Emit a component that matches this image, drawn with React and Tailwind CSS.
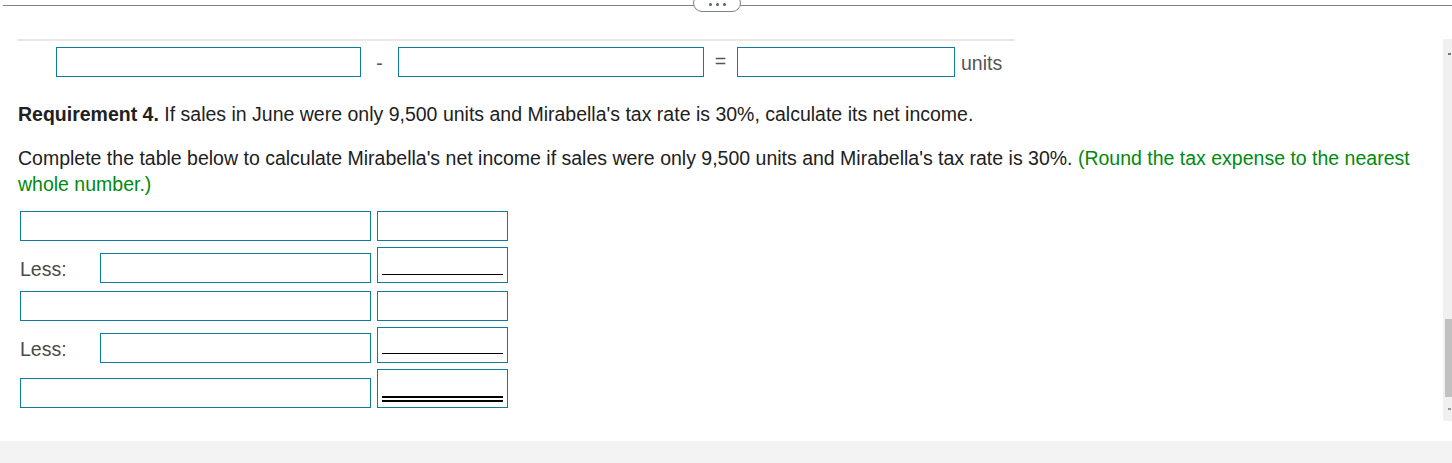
export default function App() {
    const box = "border border-[#0e7c9e] bg-white";
    const font = { fontFamily: '"Liberation Sans", Arial, sans-serif' };

    return (
        <div className="w-[1452px] h-[463px] bg-white overflow-hidden" style={font}>
            <div className="relative h-[39px]">
                <div className="absolute left-[3px] right-0 top-[5px] h-px bg-[#7b8391]"></div>
                <div className="absolute left-[693px] top-[-6px] w-[48px] h-[18px] rounded-full border border-[#7b8391] bg-white flex items-end justify-center gap-[4px] pb-[5px]">
                    <span className="w-[3px] h-[3px] rounded-full bg-[#59606b]"></span>
                    <span className="w-[3px] h-[3px] rounded-full bg-[#59606b]"></span>
                    <span className="w-[3px] h-[3px] rounded-full bg-[#59606b]"></span>
                </div>
            </div>

            <div className="flex h-[402px]">
                <div className="flex-1 flex flex-col text-[19.5px]">
                    <div className="ml-[17px] w-[998px] h-[2px] bg-[#e8e8e8]"></div>

                    <div className="flex items-center mt-[6px] ml-[56px] h-[30px] text-[#555]">
                        <div className={`${box} w-[305px] h-[30px]`}></div>
                        <span className="w-[37px] text-center pt-[4px]">-</span>
                        <div className={`${box} w-[306px] h-[30px]`}></div>
                        <span className="w-[33px] text-center">=</span>
                        <div className={`${box} w-[218px] h-[30px]`}></div>
                        <span className="ml-[6px] pt-[4px]">units</span>
                    </div>

                    <p className="ml-[18px] mt-[25px] leading-[24px] text-[#212121]">
                        <span className="font-bold">Requirement 4.</span>{" "}If sales in June were only 9,500 units and Mirabella's tax rate is 30%, calculate its net income.
                    </p>

                    <p className="ml-[18px] mt-[19px] w-[1400px] leading-[26px] text-[#212121]">
                        Complete the table below to calculate Mirabella's net income if sales were only 9,500 units and Mirabella's tax rate is 30%. <span className="text-[#008a0e]">(Round the tax expense to the nearest whole number.)</span>
                    </p>

                    <div className="ml-[20px] mt-[14px] flex flex-col text-[#4a4a4a]">
                        <div className="flex items-end gap-[6px]">
                            <div className={`${box} w-[351px] h-[30px]`}></div>
                            <div className={`${box} w-[131px] h-[30px]`}></div>
                        </div>

                        <div className="flex items-end gap-[6px] mt-[6px]">
                            <div className="w-[351px] h-[30px] flex items-center">
                                <span className="w-[80px] pt-[3px]">Less:</span>
                                <div className={`${box} w-[271px] h-[30px]`}></div>
                            </div>
                            <div className={`${box} w-[131px] h-[36px] flex flex-col justify-end px-[4px] pb-[7px]`}>
                                <div className="h-px bg-black"></div>
                            </div>
                        </div>

                        <div className="flex items-end gap-[6px] mt-[8px]">
                            <div className={`${box} w-[351px] h-[30px]`}></div>
                            <div className={`${box} w-[131px] h-[30px]`}></div>
                        </div>

                        <div className="flex items-end gap-[6px] mt-[6px]">
                            <div className="w-[351px] h-[30px] flex items-center">
                                <span className="w-[80px] pt-[3px]">Less:</span>
                                <div className={`${box} w-[271px] h-[30px]`}></div>
                            </div>
                            <div className={`${box} w-[131px] h-[36px] flex flex-col justify-end px-[4px] pb-[8px]`}>
                                <div className="h-px bg-black"></div>
                            </div>
                        </div>

                        <div className="flex items-end gap-[6px] mt-[6px]">
                            <div className={`${box} w-[351px] h-[30px]`}></div>
                            <div className={`${box} w-[131px] h-[39px] flex flex-col justify-end gap-[2px] px-[4px] pb-[5px]`}>
                                <div className="h-[2px] bg-black"></div>
                                <div className="h-[2px] bg-black"></div>
                            </div>
                        </div>
                    </div>
                </div>

                <div className="w-[9px] h-[382px] bg-[#f0f0f0] flex flex-col items-end">
                    <div className="h-[30px] w-full flex items-center justify-end pr-[1px]">
                        <span className="w-[3px] h-[2px] bg-[#777]"></span>
                    </div>
                    <div className="flex-1"></div>
                    <div className="w-[7px] h-[78px] bg-[#c1c1c1]"></div>
                    <div className="h-[24px] w-full flex items-center justify-end pr-[1px]">
                        <span className="w-[3px] h-[2px] bg-[#999]"></span>
                    </div>
                </div>
            </div>

            <div className="h-[22px] bg-[#f3f3f3]"></div>
        </div>
    );
}
